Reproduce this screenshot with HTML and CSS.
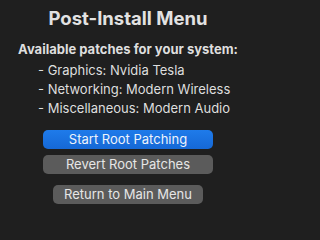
FILE: index.html
```html
<!DOCTYPE html>
<html>
<head>
<meta charset="utf-8">
<link rel="stylesheet" href="styles.css">
</head>
<body>
<div class="panel">
  <h1 class="title">Post-Install Menu</h1>
  <p class="subtitle">Available patches for your system:</p>
  <ul class="patches">
    <li>- Graphics: Nvidia Tesla</li>
    <li>- Networking: Modern Wireless</li>
    <li>- Miscellaneous: Modern Audio</li>
  </ul>
  <div class="actions">
    <button class="btn btn-primary">Start Root Patching</button>
    <button class="btn btn-wide">Revert Root Patches</button>
    <button class="btn btn-narrow">Return to Main Menu</button>
  </div>
</div>
</body>
</html>
```
FILE: styles.css
```css
html, body {
  margin: 0;
  padding: 0;
  background: #1f1f1f;
}
body {
  width: 263px;
  height: 218px;
  overflow: hidden;
  font-family: Inter, "Liberation Sans", sans-serif;
  color: #dedede;
}
.panel {
  width: 256px;
  display: flex;
  flex-direction: column;
  align-items: center;
  padding-top: 7px;
}
.title {
  margin: 0;
  font-size: 18.5px;
  font-weight: 700;
  line-height: 23px;
  color: #e2e2e2;
}
.subtitle {
  margin: 11px 0 0 0;
  font-size: 13px;
  font-weight: 700;
  line-height: 16px;
}
.patches {
  list-style: none;
  margin: 4px 0 0 0;
  padding: 0 0 0 38px;
  align-self: stretch;
  font-size: 13px;
  line-height: 19px;
}
.actions {
  margin-top: 12px;
  display: flex;
  flex-direction: column;
  align-items: center;
}
.btn {
  font-family: inherit;
  font-size: 13px;
  color: #e6e6e6;
  border: none;
  border-radius: 5px;
  height: 19px;
  padding: 0;
  background: #5b5b5b;
  line-height: 19px;
}
.btn-primary {
  width: 170px;
  background: linear-gradient(#1f7bea, #1568d6);
  color: #eef3fb;
}
.btn-wide {
  width: 170px;
  margin-top: 6px;
}
.btn-narrow {
  width: 150px;
  margin-top: 11px;
}
```
